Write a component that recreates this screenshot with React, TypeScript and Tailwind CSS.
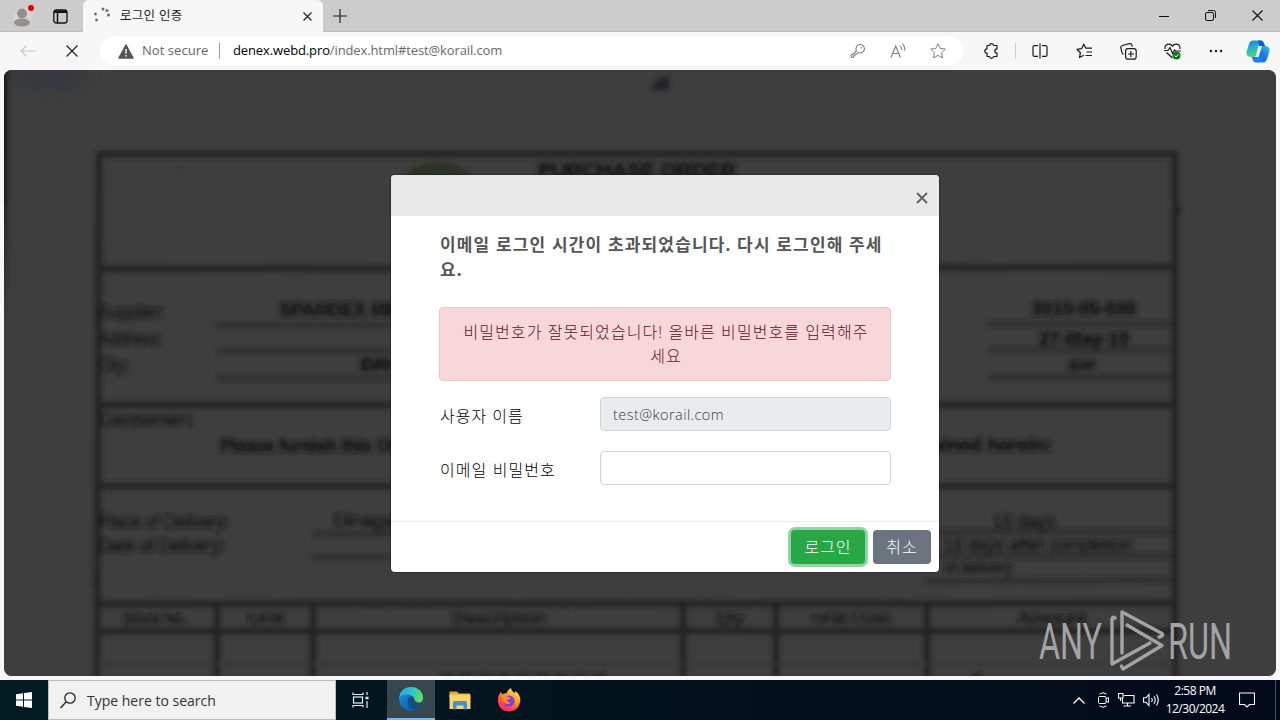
import React from 'react';

type ScanTextProps = {
  x: number;
  y: number;
  w: number;
  size?: number;
  bold?: boolean;
  children: React.ReactNode;
};

const ScanText = ({ x, y, w, size = 18, bold, children }: ScanTextProps) => (
  <text
    x={x}
    y={y}
    fontSize={size}
    fontWeight={bold ? 700 : 400}
    strokeWidth={bold ? 0.9 : 0.7}
    textLength={w}
    lengthAdjust="spacingAndGlyphs"
  >
    {children}
  </text>
);

// [x1, y1, x2, y2, stroke width]
const rules = [
  [97, 154, 1178, 154, 6],
  [97, 269, 1176, 267, 6],
  [97, 405, 1176, 405, 6],
  [97, 486, 1176, 486, 6],
  [97, 604, 1176, 603, 6],
  [97, 631, 1176, 631, 6],
  [99, 152, 97, 680, 6],
  [1175, 152, 1175, 680, 6],
  [217, 604, 217, 680, 6],
  [313, 604, 313, 680, 6],
  [683, 604, 683, 680, 6],
  [776, 604, 776, 680, 6],
  [927, 604, 927, 680, 6],
  [217, 325, 600, 325, 3],
  [217, 351, 600, 351, 3],
  [217, 378, 600, 378, 3],
  [988, 324, 1175, 324, 3],
  [988, 350, 1175, 350, 3],
  [988, 377, 1175, 377, 3],
  [313, 534, 600, 532, 3],
  [313, 557, 600, 557, 3],
  [925, 532, 1175, 532, 3],
  [925, 556, 1175, 556, 3],
  [925, 581, 1175, 580, 3],
];

const PurchaseOrder = () => (
  <svg viewBox="4 70 1272 606" className="block h-full w-full" fontFamily="'Liberation Sans', Arial, sans-serif">
    <defs>
      <filter id="scan" x="-5%" y="-5%" width="110%" height="110%">
        <feGaussianBlur stdDeviation="2.5" />
      </filter>
      <filter id="soft" x="-50%" y="-100%" width="200%" height="300%">
        <feGaussianBlur stdDeviation="7" />
      </filter>
      <linearGradient id="edgeShade" x1="0" y1="0" x2="0" y2="1">
        <stop offset="0" stopColor="#101010" />
        <stop offset="0.5" stopColor="#1d1d1d" />
        <stop offset="1" stopColor="#3e3e3e" />
      </linearGradient>
    </defs>
    <rect x="4" y="70" width="1272" height="606" fill="#3e3e3e" />
    <ellipse cx="50" cy="78" rx="40" ry="12" fill="#35383c" filter="url(#soft)" />
    <g filter="url(#scan)">
      <rect x="0" y="60" width="7" height="270" fill="url(#edgeShade)" />
      <path d="M650 87 L660 78 L669 76 L669 90 L656 91 Z" fill="#24232b" />
      <ellipse cx="438" cy="186" rx="36" ry="24" fill="#2e3222" />
      <ellipse cx="438" cy="188" rx="24" ry="20" fill="#28322b" />
      <circle cx="1177" cy="210" r="4" fill="#1e1e1e" />
      <circle cx="180" cy="171" r="5" fill="#3a3a3a" />
      {rules.map(([x1, y1, x2, y2, sw], i) => (
        <line key={i} x1={x1} y1={y1} x2={x2} y2={y2} stroke="#222222" strokeWidth={sw} />
      ))}
      <line x1="97" y1="664" x2="1175" y2="664" stroke="#353535" strokeWidth="2" />
      <g fill="#181818" stroke="#181818">
        <ScanText x={538} y={177} w={198} size={20} bold>PURCHASE ORDER</ScanText>
        <ScanText x={99} y={318} w={65}>Supplier:</ScanText>
        <ScanText x={99} y={345} w={63}>Address:</ScanText>
        <ScanText x={99} y={371} w={30}>City:</ScanText>
        <ScanText x={279} y={316} w={175} bold>SPANDEX MEDICAL</ScanText>
        <ScanText x={360} y={371} w={60} bold>BRGY.</ScanText>
        <ScanText x={1032} y={315} w={104} bold>2019-05-038</ScanText>
        <ScanText x={1039} y={345} w={90} bold>27-May-19</ScanText>
        <ScanText x={1068} y={371} w={28} size={15} bold>SVP</ScanText>
        <ScanText x={99} y={426} w={95}>Gentlemen:</ScanText>
        <ScanText x={220} y={452} w={205} bold>Please furnish this Office</ScanText>
        <ScanText x={925} y={451} w={127} bold>tained herein:</ScanText>
        <ScanText x={99} y={528} w={130}>Place of Delivery:</ScanText>
        <ScanText x={99} y={552} w={126}>Date of Delivery:</ScanText>
        <ScanText x={334} y={527} w={90}>Dinagat Is.</ScanText>
        <ScanText x={993} y={528} w={62}>15 days</ScanText>
        <ScanText x={944} y={551} w={188}>15 days after completion</ScanText>
        <ScanText x={944} y={574} w={68}>of delivery</ScanText>
        <ScanText x={122} y={624} w={66} size={16}>Stock No.</ScanText>
        <ScanText x={248} y={624} w={36} size={16}>Unit</ScanText>
        <ScanText x={452} y={624} w={94} size={16}>Description</ScanText>
        <ScanText x={716} y={624} w={28} size={16}>Qty</ScanText>
        <ScanText x={812} y={624} w={78} size={16}>Unit Cost</ScanText>
        <ScanText x={1018} y={624} w={68} size={16}>Amount</ScanText>
      </g>
      <path d="M440 677 H610 M972 677 H982" stroke="#222222" strokeWidth="6" strokeDasharray="14 5" />
    </g>
  </svg>
);

const Watermark = () => (
  <svg className="overflow-visible" width="194" height="64" viewBox="1038 608 194 64" fill="#a3a3a3" fontFamily="'Roboto', sans-serif">
    <text x="1039" y="659" fontSize="50.5" textLength="63" lengthAdjust="spacingAndGlyphs">ANY</text>
    <text x="1168" y="659" fontSize="50.5" textLength="64" lengthAdjust="spacingAndGlyphs">RUN</text>
    <g fill="none" stroke="#a3a3a3" strokeWidth="3.4" strokeLinejoin="round" strokeLinecap="round">
      <path d="M1122 653 V612 L1162 633.5 Q1164 636 1159 637" />
      <path d="M1127 625 L1162 645.5 L1123 669 L1121.500 666" />
      <path d="M1115 618 Q1112 616 1112 620 V664 L1150 643" />
    </g>
  </svg>
);

const Spinner = () => (
  <svg width="18" height="18" viewBox="0 0 18 18" fill="#6b6b6b">
    <circle cx="2.500" cy="7" r="1.400" />
    <circle cx="3.500" cy="13" r="1.400" />
    <circle cx="10" cy="2" r="1.500" />
    <circle cx="14" cy="3.500" r="1.500" />
    <circle cx="15.500" cy="8" r="1.500" />
  </svg>
);

const TabStrip = () => (
  <div className="flex h-8 border-b border-[#bdbdbd] bg-[#cccccc]">
    <div className="relative flex w-[83px] items-center pl-[13px] pt-0.5">
      <svg width="20" height="20" viewBox="0 0 20 20">
        <circle cx="10" cy="10" r="10" fill="#d6d3d1" />
        <circle cx="9" cy="6.500" r="5" fill="#93908e" />
        <ellipse cx="9" cy="15.500" rx="8" ry="4" fill="#93908e" />
      </svg>
      <span className="absolute left-7 top-[5px] h-1.5 w-1.5 rounded-full bg-[#e3000b]" />
      <svg className="ml-5" width="15" height="15" viewBox="0 0 15 15" fill="none" stroke="#111" strokeWidth="1.3">
        <rect x="0.8" y="0.8" width="13.200" height="13.200" rx="2.500" />
        <path d="M1 3.200 H14 M4.500 4 V14" strokeWidth="1.5" />
        <path d="M2 2.500 H13" strokeWidth="2.500" />
      </svg>
    </div>
    <div className="flex h-8 w-[240px] items-center rounded-t-md bg-[#f7f7f7] pl-2.5 pr-[11px]">
      <Spinner />
      <span className="ml-[9px] whitespace-nowrap text-[12.5px] tracking-[0.3px] text-[#1b1b1b]">로그인 인증</span>
      <svg className="ml-auto" width="9" height="9" viewBox="0 0 9 9" stroke="#222" strokeWidth="1.2">
        <path d="M0.500 0.500 L8.500 8.500 M8.500 0.500 L0.500 8.500" />
      </svg>
    </div>
    <svg className="ml-[10px] mt-[9px]" width="14" height="14" viewBox="0 0 14 14" stroke="#222" strokeWidth="1.2">
      <path d="M7 0 V14 M0 7 H14" />
    </svg>
    <div className="ml-auto flex items-center gap-9 pr-[17px]">
      <svg width="10" height="10" viewBox="0 0 10 10" stroke="#111">
        <path d="M0 5.500 H10" />
      </svg>
      <svg width="11" height="11" viewBox="0 0 11 11" fill="none" stroke="#111">
        <rect x="0.500" y="2.500" width="8" height="8" rx="1.500" />
        <path d="M3 0.500 H8.500 Q10.500 0.500 10.500 2.500 V8" />
      </svg>
      <svg width="11" height="11" viewBox="0 0 11 11" stroke="#111" strokeWidth="1.1">
        <path d="M0.500 0.500 L10.500 10.500 M10.500 0.500 L0.500 10.500" />
      </svg>
    </div>
  </div>
);

const starPath = 'M8 0.800 L10.200 5.400 L15.300 6.100 L11.600 9.700 L12.500 14.900 L8 12.400 L3.500 14.900 L4.400 9.700 L0.700 6.100 L5.800 5.400 Z';

const Toolbar = () => (
  <div className="flex h-[38px] items-center bg-[#f7f7f7]">
    <svg className="ml-5" width="16" height="12" viewBox="0 0 16 12" fill="none" stroke="#c8c8c8" strokeWidth="1.2">
      <path d="M16 6 H1 M6.500 0.500 L1 6 L6.500 11.500" />
    </svg>
    <svg className="ml-[30px]" width="12" height="12" viewBox="0 0 12 12" stroke="#222" strokeWidth="1.2">
      <path d="M0.500 0.500 L11.500 11.500 M11.500 0.500 L0.500 11.500" />
    </svg>
    <div className="ml-[21px] flex h-[30px] w-[865px] items-center rounded-full bg-white pl-[19px] pr-[18px] shadow-[0_0_1px_#ddd]">
      <svg width="16" height="15" viewBox="0 0 16 15">
        <path d="M8 1 L15 14 H1 Z" fill="#555" stroke="#555" strokeWidth="1.500" strokeLinejoin="round" />
        <path d="M8 5 V9.500 M8 11 V12.500" stroke="#fff" strokeWidth="1.400" />
      </svg>
      <span className="ml-2 w-[67px] whitespace-nowrap text-[13px] tracking-[0.05px] text-[#666]">Not secure</span>
      <span className="ml-2.5 h-4 w-px bg-[#999]" />
      <span className="ml-[13px] whitespace-nowrap text-[13px] tracking-[-0.12px] text-[#6a6a6a]">
        <span className="text-black">denex.webd.pro</span>/index.html#test@korail.com
      </span>
      <div className="ml-auto flex items-center gap-6 text-[#808080]">
        <svg width="16" height="16" viewBox="0 0 16 16" fill="none" stroke="currentColor" strokeWidth="1.1">
          <path d="M6.300 8.500 Q5.200 4.500 7.700 2.400 Q10.500 0.500 13.200 2.800 Q15.500 5.500 13.600 8.200 Q11.300 10.600 8 9.700 L6.500 11.200 H5 V12.700 H3.500 V14.300 H1.200 V12.200 Z" strokeLinejoin="round" />
          <circle cx="11.300" cy="4.800" r="0.800" fill="currentColor" stroke="none" />
        </svg>
        <svg width="16" height="16" viewBox="0 0 16 16" fill="none" stroke="currentColor" strokeWidth="1.2">
          <path d="M1 14.500 L5.700 3 L10.400 14.500 M2.700 10.500 H8.700" />
          <path d="M10 2.500 Q11.800 4.500 11.500 7 M12.300 0.700 Q15.500 3.800 14.600 7.500" strokeWidth="1.1" />
        </svg>
        <svg width="16" height="16" viewBox="0 0 16 16" fill="none" stroke="currentColor" strokeLinejoin="round">
          <path d={starPath} />
        </svg>
      </div>
    </div>
    <div className="flex flex-1 items-center pl-5 pr-[10px] text-[#1b1b1b]">
      <svg width="15" height="16" viewBox="0 0 15 16" fill="none" stroke="currentColor" strokeWidth="1.200" strokeLinejoin="round">
        <path d="M3 2.500 H5.500 Q5.700 0.700 7.500 0.700 Q9.300 0.700 9.500 2.500 H13 V5.800 Q10.800 6 10.800 8 Q10.800 10 13 10.200 V13.500 H9.500 Q9.300 15.300 7.500 15.300 Q5.700 15.300 5.500 13.500 H3 V10.200 Q0.800 10 0.800 8 Q0.800 6 3 5.800 Z" />
      </svg>
      <span className="ml-4 h-4 w-px bg-[#ccc]" />
      <svg className="ml-4" width="16" height="16" viewBox="0 0 16 16" fill="none" stroke="currentColor" strokeWidth="1.200">
        <path d="M6 2.600 H2.500 Q1 2.600 1 4 V12 Q1 13.400 2.500 13.400 H6 M10 2.600 H13.500 Q15 2.600 15 4 V12 Q15 13.400 13.500 13.400 H10 M8 0.500 V15.500" />
      </svg>
      <svg className="ml-7" width="17" height="16" viewBox="0 0 17 16" fill="none" stroke="currentColor" strokeWidth="1.200" strokeLinejoin="round">
        <path d="M9.800 5.200 L7.800 1.200 L5.700 5.600 L0.900 6.300 L4.400 9.700 L3.500 14.600 L7.800 12.200 M9.800 5.200 H16 M10.500 9 H16 M9.500 12.500 H16" />
      </svg>
      <svg className="ml-[27px]" width="17" height="17" viewBox="0 0 17 17" fill="none" stroke="currentColor" strokeWidth="1.200">
        <rect x="5.600" y="5.600" width="10.600" height="10.600" rx="2.500" />
        <path d="M3.500 11.500 Q2.500 11.200 2 9.500 L0.800 5 Q0.500 3 2.300 2.500 L9.500 0.700 Q11.500 0.500 12 2.300 L12.400 3.500 M10.900 8 V14 M8 11 H14" />
      </svg>
      <svg className="ml-[27px]" width="17" height="17" viewBox="0 0 17 17" fill="none" stroke="currentColor" strokeWidth="1.200">
        <path d="M1 6 Q0.500 1.200 5 1.200 Q7.300 1.200 8.500 3.200 Q9.700 1.200 12 1.200 Q16.500 1.200 16 6 M2.500 9.500 L8.500 15 M0 7.500 H4 L6 4.500 L8.500 10.500 L10.500 7 L11.500 8 H17" />
        <circle cx="12.500" cy="12.500" r="4" fill="#107c10" stroke="none" />
        <path d="M10.500 12.500 L12 14 L14.500 11.300" stroke="#fff" strokeWidth="1" />
      </svg>
      <svg className="ml-7" width="14" height="4" viewBox="0 0 14 4" fill="currentColor">
        <circle cx="2" cy="2" r="1.200" />
        <circle cx="7" cy="2" r="1.200" />
        <circle cx="12" cy="2" r="1.200" />
      </svg>
      <svg className="ml-auto" width="24" height="23" viewBox="0 0 24 23">
        <defs>
          <linearGradient id="cpA" x1="0" y1="0" x2="0.3" y2="1">
            <stop offset="0" stopColor="#1b78d8" />
            <stop offset="0.5" stopColor="#25b8c4" />
            <stop offset="1" stopColor="#4bd67c" />
          </linearGradient>
          <linearGradient id="cpB" x1="1" y1="0" x2="0" y2="1">
            <stop offset="0" stopColor="#2bbcf4" />
            <stop offset="0.5" stopColor="#1a74e0" />
            <stop offset="1" stopColor="#1f8cf0" />
          </linearGradient>
        </defs>
        <path d="M7 0.500 H15 Q17 0.500 18 3.500 L19 6 H15.500 Q13.500 6 12.800 8 L10.500 15 Q9.800 17 8 17 H4 Q0 16 0.500 12 L3 4 Q4.200 0.500 7 0.500 Z" fill="url(#cpA)" />
        <path d="M12 0.500 H15 Q17 0.500 18 3.500 L19 6 H13.500 Z" fill="#1758c8" />
        <path d="M17 22.500 H9.500 Q7.500 22.500 6.500 19.500 L5.600 17 H8.500 Q10.500 17 11.200 15 L13.500 8 Q14.200 6 16 6 H20 Q24 7 23.500 11 L21 19 Q19.800 22.500 17 22.500 Z" fill="url(#cpB)" />
        <path d="M12.500 6 H16 L12.500 17 H9.500 Z" fill="#f4fbff" />
      </svg>
    </div>
  </div>
);

const LoginModal = () => (
  <div className="flex h-[397px] w-[548px] flex-col overflow-hidden rounded bg-white shadow-[0_0_0_1px_rgba(0,0,0,0.25)]">
    <div className="flex h-[41px] shrink-0 items-center justify-end bg-[#e9e9e9] pr-[11px] pt-1">
      <svg width="12" height="12" viewBox="0 0 12 12" stroke="#606060" strokeWidth="1.8">
        <path d="M1 1 L11 11 M11 1 L1 11" />
      </svg>
    </div>
    <div className="flex-1 px-12 pt-4">
      <h5 className="whitespace-nowrap pl-px text-[17px] font-bold leading-[25px] tracking-[1.16px] text-[#555]">
        이메일 로그인 시간이 초과되었습니다. 다시 로그인해 주세
        <br />
        요.
      </h5>
      <div className="mt-[25px] flex h-[74px] flex-col items-center rounded border border-[#f0c4ca] bg-[#f8d7da] pl-0.5 pt-3 text-[16px] font-light leading-6 tracking-[1.08px] text-[#5f101c]">
        <span className="whitespace-nowrap">비밀번호가 잘못되었습니다! 올바른 비밀번호를 입력해주</span>
        <span>세요</span>
      </div>
      <div className="mt-4 flex h-[34px] items-center">
        <label className="w-[161px] whitespace-nowrap pl-px pt-1 text-[16px] font-light tracking-[1px] text-black">사용자 이름</label>
        <div className="flex h-full flex-1 items-center rounded border border-[#ced4da] bg-[#e9ecef] px-3 pt-px text-[14.5px] font-light tracking-[0.45px] text-[#343a40]">
          test@korail.com
        </div>
      </div>
      <div className="mt-5 flex h-[34px] items-center">
        <label className="w-[161px] whitespace-nowrap pl-px pt-1 text-[16px] font-light tracking-[1.08px] text-black">이메일 비밀번호</label>
        <input type="password" className="h-full min-w-0 flex-1 rounded border border-[#ced4da] bg-white px-3 outline-none" />
      </div>
    </div>
    <div className="flex h-[51px] shrink-0 items-start justify-end gap-2 border-t border-[#e9ecef] pr-2 pt-2 text-[16px] font-light tracking-[1px] text-white">
      <button className="h-[34px] w-[74px] rounded bg-[#28a745] shadow-[0_0_0_3px_rgba(40,167,69,0.5)]">로그인</button>
      <button className="h-[34px] w-[58px] rounded bg-[#6c757d]">취소</button>
    </div>
  </div>
);

const EdgeIcon = () => (
  <svg width="24" height="24" viewBox="0 0 24 24">
    <defs>
      <linearGradient id="edgeTop" x1="0" y1="0.300" x2="1" y2="0.500">
        <stop offset="0" stopColor="#2aa9e0" />
        <stop offset="0.55" stopColor="#35c6c4" />
        <stop offset="1" stopColor="#66dd58" />
      </linearGradient>
      <linearGradient id="edgeLow" x1="0" y1="0" x2="0.6" y2="1">
        <stop offset="0" stopColor="#1b9de2" />
        <stop offset="1" stopColor="#0c59a4" />
      </linearGradient>
    </defs>
    <circle cx="12" cy="12" r="12" fill="url(#edgeLow)" />
    <path d="M0.300 10.500 Q1.500 0.200 12 0 Q22.500 0.500 24 10 Q24.300 16 18 16.500 Q14 16.500 14 14.800 Q15.600 13.200 15 11.500 Q13.500 7.800 9 7.500 Q3 7.300 0.300 10.500 Z" fill="url(#edgeTop)" />
    <path d="M8.500 14 Q9 9.500 13 9.200 Q15.600 10.500 15 13 Q13.500 15 14.500 16 Q17.500 18.500 23 16 Q21 21 16 22.500 Q9 21.500 8.500 14 Z" fill="#124c8c" />
    <path d="M14 14.800 Q15.600 13.200 15 11.500 Q16 16.500 24 15.500 V17 Q19 19.500 15.500 17.500 Q13 16 14 14.800 Z" fill="#36474f" />
  </svg>
);

const FolderIcon = () => (
  <svg width="22" height="19" viewBox="0 0 22 19">
    <path d="M0.500 0.500 H8 L10 2.500 H21 V6 H0.500 Z" fill="#e8a33d" />
    <rect x="0.500" y="3.500" width="21" height="14.500" fill="#fbd667" />
    <path d="M4 18.500 V11.500 Q4 10 5.500 10 H16.500 Q18 10 18 11.500 V18.500 H14.500 V14.500 H7.500 V18.500 Z" fill="#3d93d0" />
  </svg>
);

const FirefoxIcon = () => (
  <svg width="24" height="24" viewBox="0 0 24 24">
    <defs>
      <linearGradient id="fox" x1="0.800" y1="0" x2="0.200" y2="1">
        <stop offset="0" stopColor="#fff04a" />
        <stop offset="0.4" stopColor="#ff9a26" />
        <stop offset="0.75" stopColor="#ff4148" />
        <stop offset="1" stopColor="#f0257c" />
      </linearGradient>
    </defs>
    <path d="M14 0 Q14.500 3.500 18 5 Q18.500 3.800 18 2.800 Q24 7 23.300 13.500 Q21.500 23 12 23.500 Q2 23 0.800 13.500 Q0.500 8 4 3.500 Q4.200 5.500 5.500 6.200 Q8 5 9.500 5.500 Q11 1.500 14 0 Z" fill="url(#fox)" />
    <circle cx="12" cy="13" r="5.600" fill="#7a3fe0" />
    <path d="M5 8 Q9 6.500 11.500 9 L14 10 Q12 12 9.500 12.200 Q10.500 14.500 14 14.500 Q10 17.500 6.500 14 Q5 11 5 8 Z" fill="#ff8a22" />
  </svg>
);

const Taskbar = () => (
  <div className="flex h-10 items-center bg-gradient-to-r from-[#001a20] to-[#030a1b] text-white">
    <div className="flex h-full w-12 items-center justify-center">
      <svg width="16" height="16" viewBox="0 0 16 16" fill="#fff">
        <path d="M0 2.200 L7 1.200 V7.500 H0 Z M8 1 L16 0 V7.500 H8 Z M0 8.500 H7 V14.800 L0 13.800 Z M8 8.500 H16 V16 L8 15 Z" />
      </svg>
    </div>
    <div className="flex h-full w-72 items-center border border-[#bdbdbd] bg-[#f1f1f1] pl-[11px]">
      <svg width="16" height="17" viewBox="0 0 16 17" fill="none" stroke="#222" strokeWidth="1.300">
        <circle cx="10" cy="6" r="5.200" />
        <path d="M6.300 9.800 L0.500 16" />
      </svg>
      <span className="ml-[11px] whitespace-nowrap text-[14px] text-[#333]">Type here to search</span>
    </div>
    <div className="flex h-full w-[51px] items-center justify-center pr-[3px]">
      <svg width="17" height="16" viewBox="0 0 17 16" fill="none" stroke="#e8f0f2" strokeWidth="1.200">
        <path d="M1 0.500 V2.500 H11 V0.500 M1 15.500 V13.500 H11 V15.500 M15 0 V3 M15 9 V16" />
        <rect x="1.500" y="5" width="9" height="6" />
        <path d="M13.500 6 H16.500" strokeWidth="2.500" />
      </svg>
    </div>
    <div className="flex h-full w-12 items-center justify-center border-b-2 border-[#76b9ed] bg-[#36474f]">
      <EdgeIcon />
    </div>
    <div className="flex h-full w-[50px] items-center justify-center">
      <FolderIcon />
    </div>
    <div className="flex h-full w-12 items-center justify-center">
      <FirefoxIcon />
    </div>
    <div className="ml-auto flex h-full items-center">
      <svg width="12" height="7" viewBox="0 0 12 7" fill="none" stroke="#fff" strokeWidth="1.300">
        <path d="M0.500 6.500 L6 1 L11.500 6.500" />
      </svg>
      <svg className="ml-3" width="13" height="16" viewBox="0 0 13 16" fill="none" stroke="#fff">
        <rect x="1.500" y="4.500" width="7.500" height="7" rx="1" />
        <path d="M9 7 L11.500 5.500 V10.500 L9 9 M2.500 2 Q6 -0.500 9.500 2 M2.500 14 Q6 16.500 9.500 14" />
      </svg>
      <svg className="ml-2" width="17" height="14" viewBox="0 0 17 14" fill="none" stroke="#fff" strokeWidth="1.100">
        <path d="M6 2.500 H16 V10 H4.500 V5.500 M9.500 10 V13 M5.500 13 H13" />
        <path d="M0.500 0.500 H5 V5 H0.500 Z M2.500 5 V8" />
      </svg>
      <svg className="ml-2" width="17" height="14" viewBox="0 0 17 14" fill="none" stroke="#fff" strokeWidth="1.100">
        <path d="M0.500 4.800 H3 L6 1.500 V12.500 L3 9.200 H0.500 Z M8.500 5 Q10 7 8.500 9 M11 3.200 Q13.500 7 11 10.800 M13.500 1.500 Q17 7 13.500 12.500" />
      </svg>
      <div className="ml-[5px] w-[60px] whitespace-nowrap text-center text-[12px] leading-[18px] tracking-[-0.5px]">
        <div>2:58 PM</div>
        <div>12/30/2024</div>
      </div>
      <svg className="ml-3.5" width="16" height="16" viewBox="0 0 16 16" fill="none" stroke="#fff" strokeWidth="1.100">
        <path d="M0.500 1 H15.500 V12.500 H10.500 L8 15 L5.500 12.500 H0.500 Z" />
      </svg>
      <span className="ml-5 mr-1 h-full w-px bg-[#4a5260]" />
    </div>
  </div>
);

const App = () => {
  return (
    <div className="flex h-[720px] w-[1280px] flex-col overflow-hidden bg-[#f7f7f7] font-['Open_Sans','Noto_Sans_CJK_KR',sans-serif]">
      <TabStrip />
      <Toolbar />
      <main className="relative mx-1 mb-1 h-[606px] overflow-hidden rounded-lg bg-[#3e3e3e]">
        <PurchaseOrder />
        <div className="absolute left-[387px] top-[105px]">
          <LoginModal />
        </div>
        <div className="absolute bottom-1 right-[44px]">
          <Watermark />
        </div>
      </main>
      <Taskbar />
    </div>
  );
};

export default App;
